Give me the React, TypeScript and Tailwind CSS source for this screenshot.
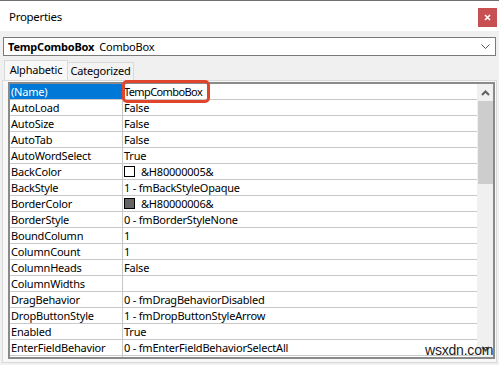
const rows: { name: string; value: string; swatch?: string }[] = [
  { name: "(Name)", value: "TempComboBox" },
  { name: "AutoLoad", value: "False" },
  { name: "AutoSize", value: "False" },
  { name: "AutoTab", value: "False" },
  { name: "AutoWordSelect", value: "True" },
  { name: "BackColor", value: "&H80000005&", swatch: "bg-white" },
  { name: "BackStyle", value: "1 - fmBackStyleOpaque" },
  { name: "BorderColor", value: "&H80000006&", swatch: "bg-[#646464]" },
  { name: "BorderStyle", value: "0 - fmBorderStyleNone" },
  { name: "BoundColumn", value: "1" },
  { name: "ColumnCount", value: "1" },
  { name: "ColumnHeads", value: "False" },
  { name: "ColumnWidths", value: "" },
  { name: "DragBehavior", value: "0 - fmDragBehaviorDisabled" },
  { name: "DropButtonStyle", value: "1 - fmDropButtonStyleArrow" },
  { name: "Enabled", value: "True" },
  { name: "EnterFieldBehavior", value: "0 - fmEnterFieldBehaviorSelectAll" },
  { name: "", value: "" },
];

export default function App() {
  return (
    <div
      className="relative w-[499px] h-[365px] overflow-hidden bg-[#f0f0f0] border-t border-[#707070] text-[11px] tracking-[-0.2px] text-black"
      style={{ fontFamily: '"Noto Sans", "Open Sans", sans-serif' }}
    >
      {/* title bar */}
      <div className="h-[30px] bg-white flex items-center justify-between pl-[9px] pr-[2px]">
        <span className="text-[11.5px] tracking-[-0.3px] leading-none mt-[1px]">Properties</span>
        <div className="w-[19px] h-[19px] bg-[#c75050] flex items-center justify-center mt-[3px]">
          <svg width="7" height="7" viewBox="0 0 7 7">
            <path d="M1 1 L6 6 M6 1 L1 6" stroke="white" strokeWidth="1.6" />
          </svg>
        </div>
      </div>

      {/* object combo */}
      <div className="mt-[6px] mx-[3px] h-[19px] border border-[#7a7a7a] bg-white flex items-center pl-[4px] pr-[5px]">
        <span className="font-bold leading-none">TempComboBox</span>
        <span className="ml-[5px] leading-none">ComboBox</span>
        <svg className="ml-auto" width="9" height="6" viewBox="0 0 9 6">
          <polyline points="0.5,0.5 4.5,4.5 8.5,0.5" fill="none" stroke="#555" strokeWidth="1" />
        </svg>
      </div>

      {/* tabs */}
      <div className="mt-[4px] flex items-end pl-[4px] h-[20px]">
        <div className="h-[20px] w-[64px] bg-[#f8f8f8] border border-b-0 border-[#d9d9d9] flex items-center justify-center whitespace-nowrap">
          Alphabetic
        </div>
        <div className="h-[18px] w-[66px] bg-[#f3f3f3] border border-l-0 border-b-0 border-[#d9d9d9] flex items-center justify-center whitespace-nowrap">
          Categorized
        </div>
      </div>

      {/* grid panel */}
      <div className="mx-[2px] h-[283px] border border-[#d9d9d9] bg-[#f8f8f8] pl-[5px] pr-[1px] pt-[1px] pb-[3px]">
        <div className="h-full border-2 border-double border-[#8a8a8a] bg-white flex overflow-hidden">
          <div className="flex-1 flex flex-col overflow-hidden">
            {rows.map((r, i) => (
              <div key={i} className="h-[16px] shrink-0 flex border-b border-[#c8c8c8]">
                <div
                  className={`w-[113px] shrink-0 pl-[1px] leading-[15px] border-r border-[#c8c8c8] whitespace-nowrap ${
                    i === 0 ? "bg-[#0078d7] text-white" : ""
                  }`}
                >
                  {r.name}
                </div>
                <div
                  className={`flex-1 flex items-center pl-[1px] leading-[15px] whitespace-nowrap ${
                    i === 0 ? "tracking-[-0.6px]" : ""
                  }`}
                >
                  {r.swatch && (
                    <span className={`w-[11px] h-[11px] border border-black mr-[6px] ${r.swatch}`} />
                  )}
                  {r.value}
                </div>
              </div>
            ))}
          </div>
          {/* scrollbar */}
          <div className="w-[16px] shrink-0 bg-[#f0f0f0] flex flex-col items-center">
            <div className="h-[17px] flex items-center justify-center">
              <svg width="9" height="6" viewBox="0 0 9 6">
                <polyline points="1,5 4.5,1.5 8,5" fill="none" stroke="#606060" strokeWidth="2" />
              </svg>
            </div>
            <div className="w-[15px] h-[83px] bg-[#cdcdcd]" />
            <div className="flex-1" />
            <div className="h-[17px] flex items-center justify-center">
              <svg width="9" height="6" viewBox="0 0 9 6">
                <polyline points="1,1 4.5,4.5 8,1" fill="none" stroke="#606060" strokeWidth="2" />
              </svg>
            </div>
          </div>
        </div>
      </div>

      {/* annotation highlight */}
      <div className="absolute left-[122px] top-[79px] w-[88px] h-[23px] border-[3px] border-[#e0452b] rounded-[5px]" />

      {/* watermark */}
      <div
        className="absolute left-[425px] top-[342px] text-[14px] leading-none text-[#222]"
        style={{ fontFamily: '"Liberation Sans", Arial, sans-serif' }}
      >
        wsxdn.com
      </div>
    </div>
  );
}
